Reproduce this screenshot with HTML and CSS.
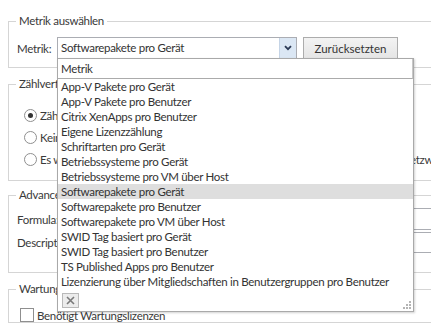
FILE: index.html
```html
<!DOCTYPE html>
<html lang="de">
<head>
    <meta charset="UTF-8">
    <title>Metrik auswählen</title>
    <link rel="stylesheet" href="styles.css">
</head>
<body>
    <div class="form">
        <fieldset class="group group-metric">
            <legend>Metrik auswählen</legend>
            <div class="metric-row">
                <label class="metric-label">Metrik:</label>
                <div class="combo">
                    <span class="combo-text">Softwarepakete pro Gerät</span>
                    <span class="combo-btn">
                        <svg width="8" height="6" viewBox="0 0 8 6"><path d="M1 1.2 L4 4.2 L7 1.2" fill="none" stroke="#2b3a55" stroke-width="1.8"/></svg>
                    </span>
                </div>
                <button class="btn">Zurücksetzten</button>
            </div>
        </fieldset>

        <fieldset class="group group-count">
            <legend>Zählverfahren</legend>
            <div class="radio-row"><span class="radio checked"></span>Zählen pro Installation</div>
            <div class="radio-row"><span class="radio"></span>Keine Zählung</div>
            <div class="radio-row"><span class="radio"></span>Es werden die Installationen auf allen Geräten und Servern im ganzen Firmennetzwerk gezählt</div>
        </fieldset>

        <fieldset class="group group-adv">
            <legend>Advanced</legend>
            <div class="field-row formula"><span class="field-label">Formula:</span><span class="field-input"></span></div>
            <div class="field-row desc"><span class="field-label">Description:</span><span class="field-input"></span></div>
        </fieldset>

        <fieldset class="group group-maint">
            <legend>Wartung</legend>
            <div class="check-row"><span class="checkbox"></span>Benötigt Wartungslizenzen</div>
        </fieldset>
    </div>

    <div class="popup">
        <div class="popup-search">Metrik</div>
        <ul class="popup-list">
            <li>App-V Pakete pro Gerät</li>
            <li>App-V Pakete pro Benutzer</li>
            <li>Citrix XenApps pro Benutzer</li>
            <li>Eigene Lizenzzählung</li>
            <li>Schriftarten pro Gerät</li>
            <li>Betriebssysteme pro Gerät</li>
            <li>Betriebssysteme pro VM über Host</li>
            <li class="selected">Softwarepakete pro Gerät</li>
            <li>Softwarepakete pro Benutzer</li>
            <li>Softwarepakete pro VM über Host</li>
            <li>SWID Tag basiert pro Gerät</li>
            <li>SWID Tag basiert pro Benutzer</li>
            <li>TS Published Apps pro Benutzer</li>
            <li>Lizenzierung über Mitgliedschaften in Benutzergruppen pro Benutzer</li>
        </ul>
        <div class="popup-footer">
            <span class="clear-btn">
                <svg width="9" height="9" viewBox="0 0 9 9"><path d="M1 1 L8 8 M8 1 L1 8" stroke="#7a7a7a" stroke-width="1.6"/></svg>
            </span>
        </div>
        <svg class="grip" width="8" height="8" viewBox="0 0 8 8" fill="#b4b4b4">
            <rect x="6" y="0" width="2" height="2"/>
            <rect x="3" y="3" width="2" height="2"/><rect x="6" y="3" width="2" height="2"/>
            <rect x="0" y="6" width="2" height="2"/><rect x="3" y="6" width="2" height="2"/><rect x="6" y="6" width="2" height="2"/>
        </svg>
    </div>
</body>
</html>
```

FILE: styles.css
```css
body {
    margin: 0;
    background: #fff;
    font-family: Lato, "Noto Sans", sans-serif;
    font-size: 11.5px;
    letter-spacing: -0.3px;
    color: #3a3a3a;
    overflow: hidden;
}
.form {
    width: 480px;
    padding-top: 13px;
}
.group {
    margin: 0 0 0 8px;
    padding: 0 0 0 8px;
    border: 1px solid #d5d5d5;
    border-right: none;
}
.group legend {
    padding: 0 3px;
    margin-left: -1px;
    line-height: 16px;
}
.group-metric {
    padding-bottom: 8px;
}
.metric-row {
    display: flex;
    align-items: center;
    margin-top: 8px;
    height: 22px;
}
.metric-label {
    width: 40px;
}
.combo {
    display: flex;
    width: 240px;
    height: 22px;
    box-sizing: border-box;
    border: 1px solid #abadb3;
}
.combo-text {
    flex: 1;
    padding-left: 3px;
    line-height: 20px;
    color: #333;
}
.combo-btn {
    width: 16px;
    display: flex;
    align-items: center;
    justify-content: center;
    background: #dbe7f4;
    border-left: 1px solid #c5d4e6;
}
.btn {
    margin-left: 6px;
    width: 95px;
    height: 22px;
    padding: 0;
    font: inherit;
    color: #333;
    border: 1px solid #acacac;
    background: linear-gradient(#f3f3f3, #e5e5e5);
}

.group-count {
    margin-top: 8px;
    padding-left: 15px;
    padding-bottom: 10px;
}
.radio-row {
    display: flex;
    align-items: center;
    height: 22px;
    white-space: nowrap;
}
.group-count legend {
    margin-left: -8px;
}
.group-count .radio-row:first-of-type {
    margin-top: 12px;
}
.radio {
    width: 11px;
    height: 11px;
    border: 1px solid #8f8f8f;
    border-radius: 50%;
    margin-right: 3px;
    background: #fff;
    display: flex;
    align-items: center;
    justify-content: center;
}
.radio.checked::after {
    content: "";
    width: 5px;
    height: 5px;
    border-radius: 50%;
    background: #333;
}

.group-adv {
    margin-top: 6px;
    padding-bottom: 19px;
}
.field-row {
    display: flex;
    align-items: center;
}
.field-row.formula {
    margin-top: 5px;
    height: 22px;
}
.field-row.desc {
    margin-top: 2px;
    height: 21px;
}
.field-label {
    width: 90px;
}
.field-input {
    flex: 1;
    align-self: stretch;
    border: 1px solid #abadb3;
    border-right: none;
}

.group-maint {
    margin-top: 8px;
    height: 40px;
}
.check-row {
    display: flex;
    align-items: center;
    margin-top: 11px;
    margin-left: 3px;
    height: 14px;
}
.checkbox {
    width: 12px;
    height: 12px;
    border: 1px solid #8f8f8f;
    margin-right: 3px;
}

.popup {
    position: absolute;
    left: 57px;
    top: 58px;
    width: 357px;
    height: 254px;
    box-sizing: border-box;
    border: 1px solid #a9a9a9;
    background: #fff;
    box-shadow: 1px 1px 2px rgba(0, 0, 0, 0.18);
    color: #333;
}
.popup-search {
    height: 19px;
    line-height: 19px;
    padding-left: 3px;
    border-bottom: 1px solid #ababab;
    border-right: 1px solid #c8c8c8;
}
.popup-list {
    list-style: none;
    margin: 0;
    padding: 0;
}
.popup-list li {
    height: 15px;
    line-height: 15px;
    padding-left: 3px;
    white-space: nowrap;
}
.popup-list li.selected {
    background: #dedede;
}
.popup-footer {
    padding: 4px 0 0 4px;
}
.clear-btn {
    width: 15px;
    height: 13px;
    border: 1px solid #b9b9b9;
    background: #ececec;
    display: flex;
    align-items: center;
    justify-content: center;
}
.grip {
    position: absolute;
    right: 2px;
    bottom: 2px;
}
```
